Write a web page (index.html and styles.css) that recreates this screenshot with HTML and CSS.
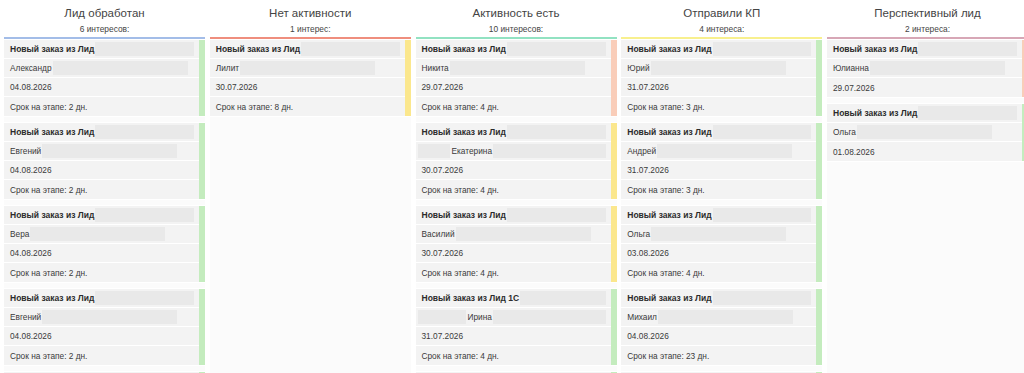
FILE: index.html
```html
<!DOCTYPE html>
<html lang="ru">
<head>
  <meta charset="UTF-8">
  <meta name="viewport" content="width=device-width, initial-scale=1.0">
  <title>Воронка интересов</title>
  <link rel="stylesheet" href="styles.css">
</head>
<body>
  <div class="board">

    <!-- Лид обработан -->
    <div class="column">
      <div class="column-head">
        <div class="column-title">Лид обработан</div>
        <div class="column-count">6 интересов:</div>
      </div>
      <div class="column-body blue">
        <div class="card green">
          <div class="row title">Новый заказ из Лид<span class="mask fill"></span></div>
          <div class="row">Александр<span class="mask name"></span></div>
          <div class="row">04.08.2026</div>
          <div class="row">Срок на этапе: 2 дн.</div>
        </div>
        <div class="card green">
          <div class="row title">Новый заказ из Лид<span class="mask fill"></span></div>
          <div class="row">Евгений<span class="mask name"></span></div>
          <div class="row">04.08.2026</div>
          <div class="row">Срок на этапе: 2 дн.</div>
        </div>
        <div class="card green">
          <div class="row title">Новый заказ из Лид<span class="mask fill"></span></div>
          <div class="row">Вера<span class="mask name"></span></div>
          <div class="row">04.08.2026</div>
          <div class="row">Срок на этапе: 2 дн.</div>
        </div>
        <div class="card green">
          <div class="row title">Новый заказ из Лид<span class="mask fill"></span></div>
          <div class="row">Евгений<span class="mask name"></span></div>
          <div class="row">04.08.2026</div>
          <div class="row">Срок на этапе: 2 дн.</div>
        </div>
        <div class="card green">
          <div class="row title">Новый заказ из Лид<span class="mask fill"></span></div>
          <div class="row">Ирина<span class="mask name"></span></div>
          <div class="row">04.08.2026</div>
          <div class="row">Срок на этапе: 2 дн.</div>
        </div>
      </div>
    </div>

    <!-- Нет активности -->
    <div class="column">
      <div class="column-head">
        <div class="column-title">Нет активности</div>
        <div class="column-count">1 интерес:</div>
      </div>
      <div class="column-body red">
        <div class="card yellow">
          <div class="row title">Новый заказ из Лид<span class="mask fill"></span></div>
          <div class="row">Лилит<span class="mask name"></span></div>
          <div class="row">30.07.2026</div>
          <div class="row">Срок на этапе: 8 дн.</div>
        </div>
      </div>
    </div>

    <!-- Активность есть -->
    <div class="column">
      <div class="column-head">
        <div class="column-title">Активность есть</div>
        <div class="column-count">10 интересов:</div>
      </div>
      <div class="column-body teal">
        <div class="card salmon">
          <div class="row title">Новый заказ из Лид<span class="mask fill"></span></div>
          <div class="row">Никита<span class="mask name"></span></div>
          <div class="row">29.07.2026</div>
          <div class="row">Срок на этапе: 4 дн.</div>
        </div>
        <div class="card yellow">
          <div class="row title">Новый заказ из Лид<span class="mask fill"></span></div>
          <div class="row"><span class="mask lead w32"></span>Екатерина<span class="mask fill"></span></div>
          <div class="row">30.07.2026</div>
          <div class="row">Срок на этапе: 4 дн.</div>
        </div>
        <div class="card yellow">
          <div class="row title">Новый заказ из Лид<span class="mask fill"></span></div>
          <div class="row">Василий<span class="mask name"></span></div>
          <div class="row">30.07.2026</div>
          <div class="row">Срок на этапе: 4 дн.</div>
        </div>
        <div class="card green">
          <div class="row title">Новый заказ из Лид 1С<span class="mask fill"></span></div>
          <div class="row"><span class="mask lead w48"></span>Ирина<span class="mask fill"></span></div>
          <div class="row">31.07.2026</div>
          <div class="row">Срок на этапе: 4 дн.</div>
        </div>
        <div class="card green">
          <div class="row title">Новый заказ из Лид<span class="mask fill"></span></div>
          <div class="row">Мария<span class="mask name"></span></div>
          <div class="row">31.07.2026</div>
          <div class="row">Срок на этапе: 4 дн.</div>
        </div>
      </div>
    </div>

    <!-- Отправили КП -->
    <div class="column">
      <div class="column-head">
        <div class="column-title">Отправили КП</div>
        <div class="column-count">4 интереса:</div>
      </div>
      <div class="column-body yellow-top">
        <div class="card green">
          <div class="row title">Новый заказ из Лид<span class="mask fill"></span></div>
          <div class="row">Юрий<span class="mask name"></span></div>
          <div class="row">31.07.2026</div>
          <div class="row">Срок на этапе: 3 дн.</div>
        </div>
        <div class="card green">
          <div class="row title">Новый заказ из Лид<span class="mask fill"></span></div>
          <div class="row">Андрей<span class="mask name"></span></div>
          <div class="row">31.07.2026</div>
          <div class="row">Срок на этапе: 3 дн.</div>
        </div>
        <div class="card green">
          <div class="row title">Новый заказ из Лид<span class="mask fill"></span></div>
          <div class="row">Ольга<span class="mask name"></span></div>
          <div class="row">03.08.2026</div>
          <div class="row">Срок на этапе: 4 дн.</div>
        </div>
        <div class="card green">
          <div class="row title">Новый заказ из Лид<span class="mask fill"></span></div>
          <div class="row">Михаил<span class="mask name"></span></div>
          <div class="row">04.08.2026</div>
          <div class="row">Срок на этапе: 23 дн.</div>
        </div>
        <div class="card green">
          <div class="row title">Новый заказ из Лид<span class="mask fill"></span></div>
          <div class="row">Олег<span class="mask name"></span></div>
          <div class="row">04.08.2026</div>
          <div class="row">Срок на этапе: 2 дн.</div>
        </div>
      </div>
    </div>

    <!-- Перспективный лид -->
    <div class="column">
      <div class="column-head">
        <div class="column-title">Перспективный лид</div>
        <div class="column-count">2 интереса:</div>
      </div>
      <div class="column-body pink">
        <div class="card salmon">
          <div class="row title">Новый заказ из Лид<span class="mask fill"></span></div>
          <div class="row">Юлианна<span class="mask name"></span></div>
          <div class="row">29.07.2026</div>
        </div>
        <div class="card green">
          <div class="row title">Новый заказ из Лид<span class="mask fill"></span></div>
          <div class="row">Ольга<span class="mask name"></span></div>
          <div class="row">01.08.2026</div>
        </div>
      </div>
    </div>

  </div>
</body>
</html>
```

FILE: styles.css
```css
:root {
  --card-bg: #f3f3f3;
  --mask-bg: #e9e9e9;
  --text-color: #3a3a3a;
  --stripe-green: #c4ecbe;
  --stripe-yellow: #fbe78d;
  --stripe-salmon: #f9cdb9;
}

body {
  font-family: "Liberation Sans", Arial, sans-serif;
  color: var(--text-color);
  background: #fff;
  margin: 0;
  padding: 0;
  height: 373px;
  overflow: hidden;
}

.board {
  display: flex;
  gap: 4.75px;
  padding-left: 4px;
  width: max-content;
}

.column {
  width: 201px;
  flex-shrink: 0;
  display: flex;
  flex-direction: column;
}

.column-head {
  height: 37px;
  box-sizing: border-box;
  padding-top: 6px;
  text-align: center;
}

.column-title {
  font-size: 11.5px;
  line-height: 14px;
  color: #444;
}

.column-count {
  font-size: 8.4px;
  line-height: 10px;
  margin-top: 4px;
  color: #444;
}

.column-body {
  border-top: 3px solid #ccc;
  background: #fbfbfb;
  height: 400px;
  display: flex;
  flex-direction: column;
  gap: 7px;
}

.column-body.blue { border-top-color: #a3bde8; }
.column-body.red { border-top-color: #ef8e7e; }
.column-body.teal { border-top-color: #92e2c2; }
.column-body.yellow-top { border-top-color: #f8f08e; }
.column-body.pink { border-top-color: #d7a7b6; }

.card {
  background: var(--card-bg);
  border-right: 6px solid var(--stripe-green);
  box-shadow: 0 0 0 1px #fff;
}

.card.green { border-right-color: var(--stripe-green); }
.card.yellow { border-right-color: var(--stripe-yellow); }
.card.salmon { border-right-color: var(--stripe-salmon); }

.row {
  display: flex;
  align-items: center;
  height: 18px;
  padding-left: 6px;
  border-bottom: 1px solid #fff;
  font-size: 8.3px;
  white-space: nowrap;
}

.row:last-child {
  border-bottom: none;
  height: 19px;
}

.row.title {
  font-weight: bold;
  font-size: 8.5px;
  color: #2c2c2c;
}

.mask {
  display: inline-block;
  height: 14px;
  background: var(--mask-bg);
  margin-left: 1px;
}

.mask.fill {
  flex: 1;
  margin-right: 5px;
}

.mask.name {
  width: 135px;
}

.mask.lead {
  margin-left: -4px;
  margin-right: 2px;
}

.mask.w32 { width: 32px; }
.mask.w48 { width: 48px; }
```
